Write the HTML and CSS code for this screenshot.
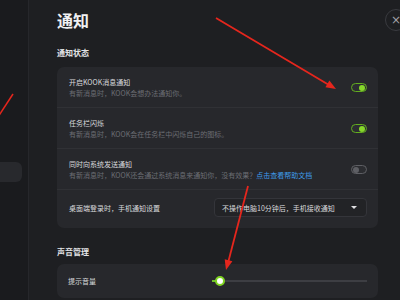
FILE: index.html
```html
<!DOCTYPE html>
<html lang="zh-CN">
<head>
    <meta charset="UTF-8">
    <title>通知</title>
    <link rel="stylesheet" href="styles.css">
</head>
<body>
    <div class="app">
        <div class="sidebar">
            <div class="side-item"></div>
        </div>
        <div class="main">
            <h1 class="title">通知</h1>

            <h3 class="section">通知状态</h3>
            <div class="card">
                <div class="row">
                    <div class="text">
                        <div class="label">开启KOOK消息通知</div>
                        <div class="desc">有新消息时，KOOK会想办法通知你。</div>
                    </div>
                    <span class="toggle on"></span>
                </div>
                <div class="row">
                    <div class="text">
                        <div class="label">任务栏闪烁</div>
                        <div class="desc">有新消息时，KOOK会在任务栏中闪烁自己的图标。</div>
                    </div>
                    <span class="toggle on"></span>
                </div>
                <div class="row">
                    <div class="text">
                        <div class="label">同时向系统发送通知</div>
                        <div class="desc">有新消息时，KOOK还会通过系统消息来通知你，没有效果？<a href="" class="link">点击查看帮助文档</a></div>
                    </div>
                    <span class="toggle"></span>
                </div>
                <div class="row row-select">
                    <div class="label">桌面端登录时，手机通知设置</div>
                    <div class="select">
                        <span>不操作电脑10分钟后，手机接收通知</span>
                        <span class="caret"></span>
                    </div>
                </div>
            </div>

            <h3 class="section section-sound">声音管理</h3>
            <div class="card">
                <div class="row row-volume">
                    <div class="label">提示音量</div>
                    <div class="slider">
                        <div class="fill"></div>
                        <div class="knob"></div>
                    </div>
                </div>
            </div>
        </div>
        <div class="close">&#215;</div>

        <!-- 스크린샷 위의 빨간 화살표 주석 -->
        <svg class="marks" width="400" height="300" viewBox="0 0 400 300">
            <line x1="216" y1="18" x2="329" y2="85" stroke="#e5261d" stroke-width="1.8"/>
            <polygon points="336,89 325.4,87.3 329.4,80.5" fill="#e5261d"/>
            <line x1="248" y1="186" x2="228.5" y2="261" stroke="#e5261d" stroke-width="1.8"/>
            <polygon points="226,270 224.7,259.3 232.4,261.3" fill="#e5261d"/>
            <line x1="13" y1="94" x2="-2" y2="117" stroke="#e5261d" stroke-width="1.5"/>
        </svg>
    </div>
</body>
</html>
```

FILE: styles.css
```css
body{
    margin: 0;
    background-color: #1e1f22;
    font-family: "Noto Sans CJK SC", "Noto Sans", sans-serif;
    color: #d6d7da;
}
.app{
    width: 400px;
    height: 300px;
    display: flex;
    position: relative;
    overflow: hidden;
}
.sidebar{
    width: 28px;
    flex-shrink: 0;
    background-color: #1a1b1e;
    border-right: 1px solid #26272b;
    padding-top: 162px;
}
.side-item{
    width: 22px;
    height: 20px;
    background-color: #28292d;
    border-radius: 0 6px 6px 0;
}
.main{
    flex: 1;
    padding: 10px 22px 0 28px;
}
.title{
    margin: 0;
    font-size: 16px;
    line-height: 20px;
    font-weight: bold;
    color: #f0f0f2;
}
.section{
    margin: 18px 0 9px;
    font-size: 8px;
    line-height: 10px;
    font-weight: bold;
    color: #e2e3e6;
}
.section-sound{
    margin-top: 19px;
    margin-bottom: 7px;
}
.card{
    background-color: #27282c;
    border-radius: 7px;
}
.row{
    display: flex;
    align-items: center;
    justify-content: space-between;
    padding: 10px 11px 9px 12px;
    border-bottom: 1px solid #303135;
}
.row:last-child{
    border-bottom: none;
}
.label{
    font-size: 7px;
    line-height: 10px;
    color: #d8d9dc;
}
.desc{
    margin-top: 1px;
    font-size: 7px;
    line-height: 10px;
    color: #6c6e74;
    white-space: nowrap;
}
.link{
    color: #3f9deb;
    text-decoration: none;
}
.toggle{
    width: 12px;
    height: 7px;
    border: 1.5px solid #5e5f64;
    border-radius: 6px;
    background-color: #2c2d31;
    display: flex;
    align-items: center;
    padding: 0 1px;
    flex-shrink: 0;
}
.toggle::after{
    content: "";
    width: 6px;
    height: 6px;
    border-radius: 50%;
    background-color: #5e5f64;
}
.toggle.on{
    border-color: #62ad1f;
    justify-content: flex-end;
}
.toggle.on::after{
    background-color: #86d82a;
}
.row-select{
    padding: 8px 11px 11px 12px;
}
.select{
    width: 153px;
    height: 19px;
    border: 1px solid #34353a;
    border-radius: 4px;
    background-color: #222326;
    display: flex;
    align-items: center;
    justify-content: space-between;
    padding: 0 9px 0 7px;
    box-sizing: border-box;
    font-size: 7px;
    color: #d8d9dc;
}
.caret{
    width: 0;
    height: 0;
    border-left: 3px solid transparent;
    border-right: 3px solid transparent;
    border-top: 3px solid #e0e0e3;
}
.row-volume{
    padding: 12px 11px 12px 11px;
}
.slider{
    width: 155px;
    height: 2px;
    background-color: #3d3e43;
    position: relative;
}
.fill{
    width: 7px;
    height: 2px;
    background-color: #6fc02a;
}
.knob{
    position: absolute;
    left: 3px;
    top: -4px;
    width: 6px;
    height: 6px;
    border: 2px solid #7ed321;
    border-radius: 50%;
    background-color: #ffffff;
}
.close{
    position: absolute;
    left: 385px;
    top: 9px;
    width: 20px;
    height: 20px;
    border: 1px solid #3a3b40;
    border-radius: 50%;
    background-color: #1e1f22;
    color: #a0a1a6;
    font-size: 12px;
    line-height: 20px;
    text-align: center;
    font-family: "DejaVu Sans", sans-serif;
}
/* 클릭을 막지 않도록 */
.marks{
    position: absolute;
    left: 0;
    top: 0;
    pointer-events: none;
}
```
